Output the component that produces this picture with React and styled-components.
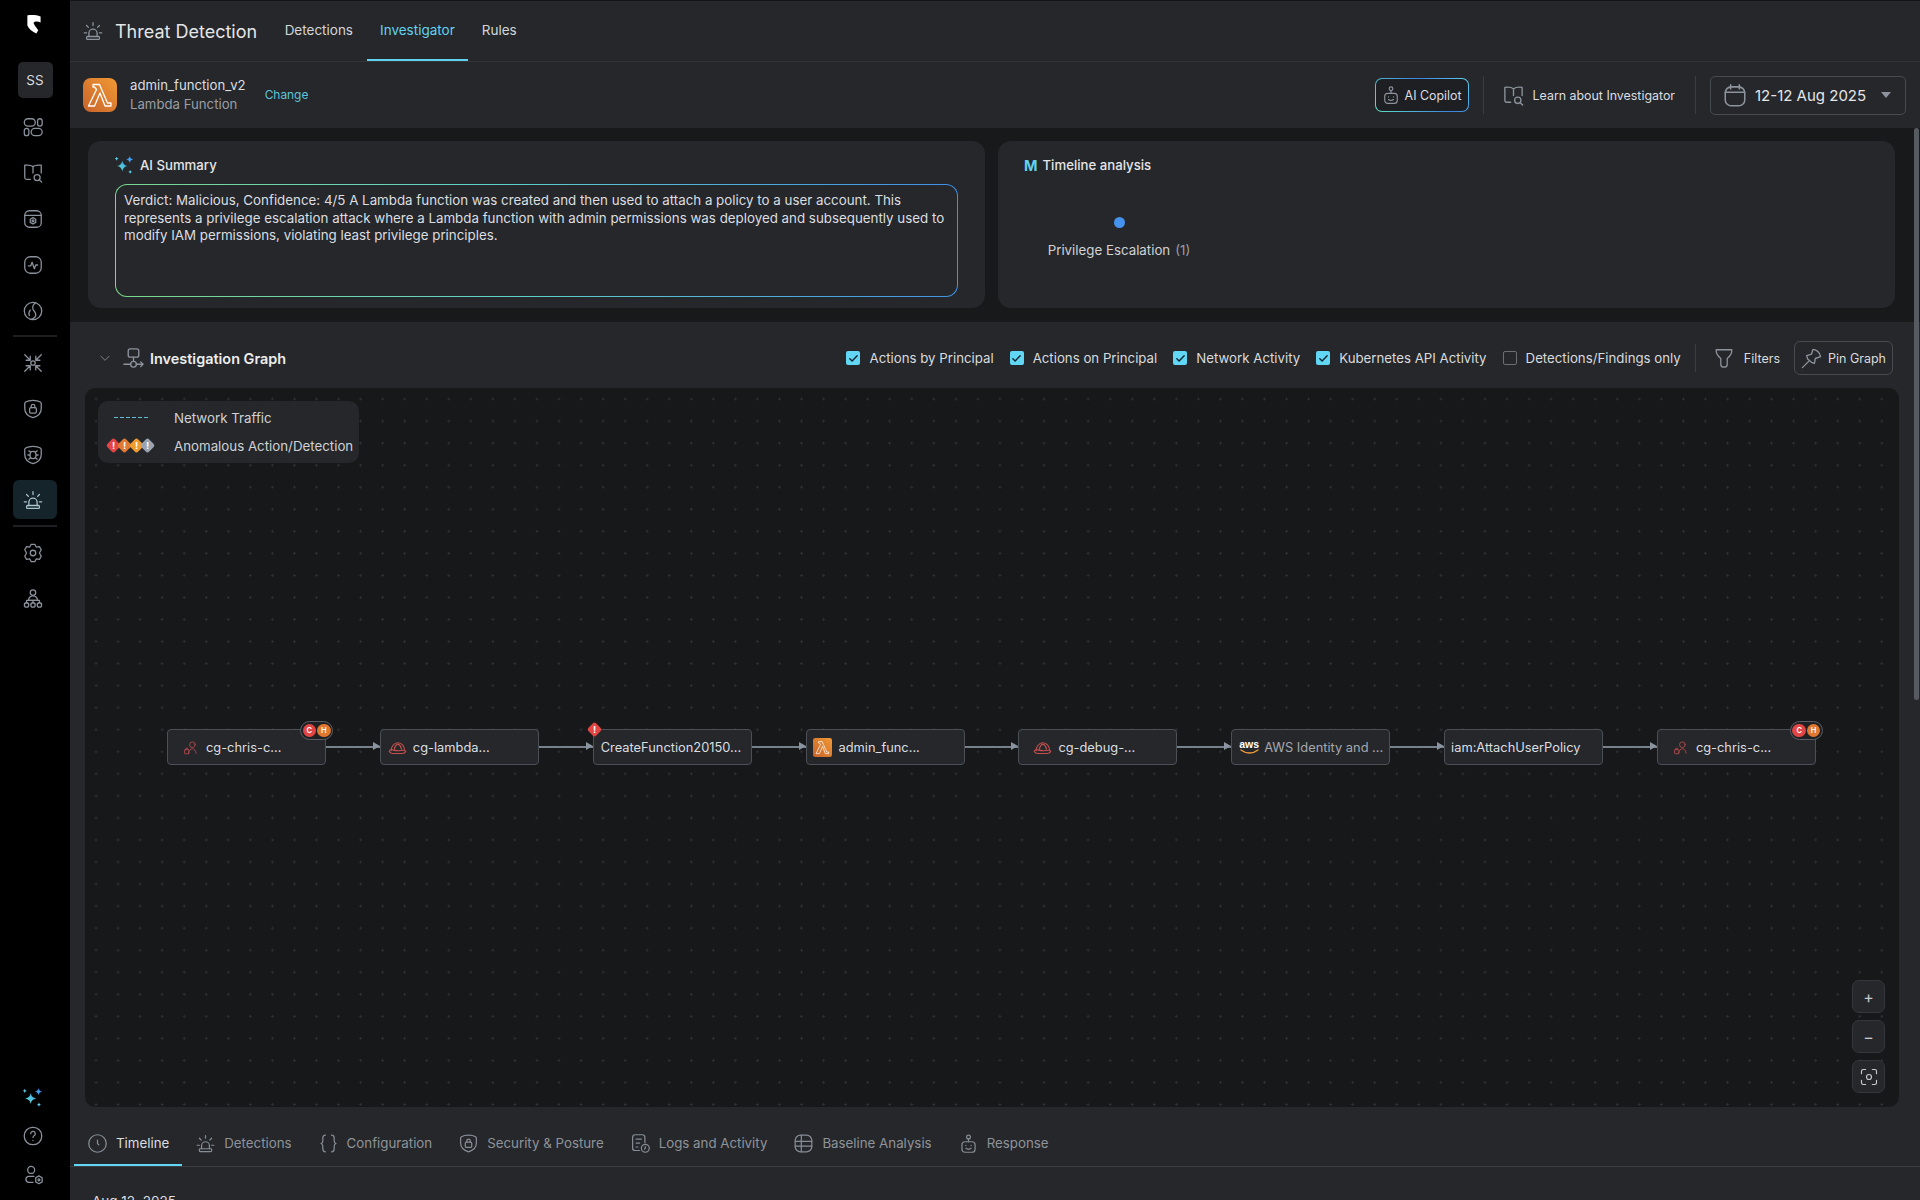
import React from "react";
import styled, { createGlobalStyle } from "styled-components";

const GlobalStyle = createGlobalStyle`
  html, body {
    margin: 0;
    padding: 0;
    height: 100%;
    overflow: hidden;
    background: #18191b;
    font-family: Inter, "Liberation Sans", sans-serif;
  }
  * { box-sizing: border-box; }
`;

const Shell = styled.div`
  display: flex;
  width: 1920px;
  height: 1200px;
  overflow: hidden;
  color: #e6e7e9;
`;

/* ---------- left rail ---------- */

const Rail = styled.nav`
  width: 70px;
  flex-shrink: 0;
  background: #000;
  display: flex;
  flex-direction: column;
  align-items: center;
  padding: 14px 0 6px;
`;

const RailLogo = styled.div`
  height: 24px;
  margin: 0 4px 24px 0;
  color: #fff;
`;

const Avatar = styled.div`
  width: 35px;
  height: 36px;
  border-radius: 5px;
  background: #25272b;
  display: flex;
  align-items: center;
  justify-content: center;
  font-size: 13.5px;
  color: #d9dbde;
  margin-bottom: 6px;
`;

const RailItem = styled.div`
  width: 44px;
  height: ${p => (p.$active ? "39px" : "46px")};
  margin: ${p => (p.$active ? "2px 0 0" : "0")};
  padding-right: 4px;
  border-radius: 6px;
  display: flex;
  align-items: center;
  justify-content: center;
  background: ${p => (p.$active ? "#14242a" : "transparent")};
  color: ${p => (p.$active ? "#a9c4cc" : "#8b929c")};
`;

const RailDivider = styled.div`
  width: 44px;
  height: 2px;
  margin: ${p => p.$margin || "1px 0 3px"};
  background: #1d1f22;
`;

const RailBottom = styled.div`
  margin-top: auto;
  display: flex;
  flex-direction: column;
  align-items: center;
  padding-right: 4px;
`;

const RailFootItem = styled.div`
  height: 38.5px;
  display: flex;
  align-items: center;
  color: #8b929c;
`;

/* ---------- generic icon ---------- */

const Svg = styled.svg.attrs(p => ({
  viewBox: "0 0 24 24",
  width: p.$size || 20,
  height: p.$size || 20,
  fill: "none",
  stroke: "currentColor",
  strokeWidth: p.$stroke || 1.4,
  strokeLinecap: "round",
  strokeLinejoin: "round",
}))`
  flex-shrink: 0;
  display: block;
  color: ${p => p.$color || "inherit"};
`;

const Siren = props => (
  <Svg {...props}>
    <rect x="5" y="18" width="14" height="3.2" rx="1" />
    <path d="M7.5 18v-3.5a4.5 4.5 0 0 1 9 0V18" />
    <path d="M12 3v3M5 6l2 2M19 6l-2 2M2.5 14H5M19 14h2.5" />
  </Svg>
);
const Panels = props => (
  <Svg {...props}>
    <rect x="2.5" y="3" width="12" height="8" rx="4" />
    <rect x="17" y="3" width="5" height="8" rx="2.5" />
    <rect x="2.5" y="13.5" width="5" height="8" rx="2.5" />
    <rect x="10" y="13.5" width="12" height="8" rx="4" />
  </Svg>
);
const MapSearch = props => (
  <Svg {...props}>
    <path d="M9 19H5a2 2 0 0 1-2-2V3.5C7 3 10 3.5 12 5c2-1.5 5-2 9-1.500V12" />
    <path d="M12 5v7" />
    <circle cx="16.5" cy="17" r="3.3" />
    <path d="M19 19.5l2.5 2.5" />
  </Svg>
);
const GearCard = props => (
  <Svg {...props}>
    <rect x="3" y="3" width="18" height="18" rx="5" />
    <path d="M3 8h18" />
    <path d="M12 10.5l3 1.7v3.5l-3 1.8-3-1.8v-3.5z" />
    <circle cx="12" cy="14" r="1" />
  </Svg>
);
const Pulse = props => (
  <Svg {...props}>
    <rect x="3" y="3" width="18" height="18" rx="6" />
    <path d="M7 13h2.5l1.5-4 2.5 7 1.5-4H17" />
  </Svg>
);
const Swirl = props => (
  <Svg {...props}>
    <circle cx="12" cy="12" r="9.5" />
    <path d="M15 3c-3 2-4 4-3 7 1 2.5 3 3 3 6 0 2-2 4-5 5" />
    <path d="M8 17c-1-2-.5-4 1-6" />
  </Svg>
);
const Converge = props => (
  <Svg {...props}>
    <circle cx="12" cy="12" r="2.4" />
    <path d="M3 3l6 6M9 4.5V9H4.5M21 3l-6 6M15 4.5V9h4.5M3 21l6-6M4.5 15H9v4.5M21 21l-6-6M19.5 15H15v4.5" />
  </Svg>
);
const shield =
  "M12 2.5c3 0 6 .5 8 1.800.7.5 1 1 1 1.800v5.400c0 5-4 8.500-9 10-5-1.500-9-5-9-10V6.100c0-.8.3-1.300 1-1.800 2-1.300 5-1.800 8-1.800z";
const ShieldLock = props => (
  <Svg {...props}>
    <path d={shield} />
    <rect x="8.3" y="10.5" width="7.4" height="6" rx="1.5" />
    <path d="M10 10.5V9a2 2 0 0 1 4 0v1.500" />
  </Svg>
);
const ShieldBug = props => (
  <Svg {...props}>
    <path d={shield} />
    <ellipse cx="12" cy="12" rx="3.3" ry="4" />
    <path d="M9 8.500l-1.500-1M15 8.500l1.500-1M8.500 12H6.500M15.500 12h2M9 15.500l-1.500 1M15 15.500l1.500 1" />
  </Svg>
);
const Gear = props => (
  <Svg {...props}>
    <path d="M10 2.500h4l1.500 3 3.500-.5 2 3.500-2 3.500 2 3.500-2 3.500-3.500-.5-1.500 3h-4l-1.500-3-3.500.5-2-3.500 2-3.500-2-3.500 2-3.500 3.500.5z" />
    <circle cx="12" cy="12" r="3" />
  </Svg>
);
const Org = props => (
  <Svg {...props}>
    <circle cx="12" cy="5" r="3" />
    <path d="M7 13.500c0-2.500 2-5 5-5s5 2.500 5 5z" />
    <path d="M5 16v-2.500h14V16M12 13.500V16" />
    <circle cx="5" cy="18.5" r="2.4" />
    <circle cx="12" cy="18.5" r="2.4" />
    <circle cx="19" cy="18.5" r="2.4" />
  </Svg>
);
const Help = props => (
  <Svg {...props}>
    <rect x="2.5" y="2.5" width="19" height="19" rx="9" />
    <path d="M9.500 9.500a2.500 2.500 0 1 1 3.600 2.200c-.8.400-1.100 1-1.100 1.800M12 16.800v.1" />
  </Svg>
);
const UserGear = props => (
  <Svg {...props}>
    <circle cx="10" cy="6.5" r="3.8" />
    <path d="M13 13.500H7a3.300 3.300 0 0 0 0 6.500h5" />
    <path d="M18.500 13l3.500 2v4.500l-3.500 2-3.500-2V15z" />
    <circle cx="18.5" cy="17.3" r="1" />
  </Svg>
);
const Robot = props => (
  <Svg {...props}>
    <rect x="4.5" y="10" width="15" height="12" rx="3.5" />
    <circle cx="12" cy="4.5" r="2.2" />
    <path d="M12 6.700V10M9 14.200v.1M15 14.200v.1M9 17.500c1.800 1.300 4.200 1.300 6 0" />
  </Svg>
);
const Calendar = props => (
  <Svg {...props}>
    <rect x="3" y="4.5" width="18" height="17.5" rx="5.5" />
    <path d="M3 9.500h18M8 2.500v4M16 2.500v4" />
  </Svg>
);
const Flow = props => (
  <Svg {...props}>
    <rect x="6.5" y="2" width="11" height="8.5" rx="2" />
    <path d="M12 10.500V15M2 18h7M15 18h7M19.500 15.500L22 18l-2.500 2.500" />
    <circle cx="12" cy="18" r="3" />
  </Svg>
);
const Funnel = props => (
  <Svg {...props}>
    <path d="M3.500 3h17c.5 4-2 7-5 9.500V19c0 1.800-1.500 3-3.500 3s-3.500-1.200-3.500-3v-6.500C5.500 10 3 7 3.500 3z" />
  </Svg>
);
const PinIcon = props => (
  <Svg {...props}>
    <path d="M13.500 2.500c4 .5 7 3.500 8 7.500l-5.500 2-1 5-3-1-4-3.500-1-3.500 5-1.500z" />
    <path d="M9 15l-6.500 6.500" />
  </Svg>
);
const Clock = props => (
  <Svg {...props}>
    <circle cx="12" cy="12" r="10" />
    <path d="M12 8v4l1.500 1.500" />
  </Svg>
);
const Braces = props => (
  <Svg {...props}>
    <path d="M8.500 2.500C6 2.500 5.500 4 5.500 6v3c0 1.500-.7 2.500-2 3 1.300.5 2 1.500 2 3v3c0 2 .5 3.500 3 3.500" />
    <path d="M15.500 2.500c2.500 0 3 1.500 3 3.500v3c0 1.500.7 2.500 2 3-1.300.5-2 1.500-2 3v3c0 2-.5 3.500-3 3.500" />
  </Svg>
);
const LogClock = props => (
  <Svg {...props}>
    <path d="M11 20H6a3 3 0 0 1-3-3V5a3 3 0 0 1 3-3h8a3 3 0 0 1 3 3v6" />
    <path d="M7 7h6M7 11.500h4M7 16h2" />
    <circle cx="17.5" cy="17.5" r="4.5" />
    <path d="M17.500 15.500v2l-1 1" />
  </Svg>
);
const TableRound = props => (
  <Svg {...props}>
    <rect x="2.5" y="2.5" width="19" height="19" rx="6" />
    <path d="M2.500 9.500h19M2.500 15h19M9.500 2.500v19" />
  </Svg>
);
const PersonLock = props => (
  <Svg {...props}>
    <circle cx="15" cy="7.5" r="4.5" />
    <path d="M9 21c.5-4 3-7 6-7s5.500 3 6 7" />
    <rect x="2.5" y="15.5" width="7" height="6.5" rx="1" />
    <path d="M4.300 15.500v-1a1.700 1.700 0 0 1 3.400 0v1" />
  </Svg>
);
const HardHat = props => (
  <Svg {...props}>
    <path d="M4 16c0-5 3.500-10 8.500-10S21 10.500 21 16" />
    <path d="M8 14c.5-3 2-5.500 4.500-6.500M17 14c-.5-3-2-5.500-4.500-6.500" />
    <path d="M1.500 17c.5-2 2-2.500 4-2 4 1 9 1.500 13.500.5 1.500-.3 3 .3 3.500 1.500-1 1.800-3 2.500-5 2.500H6c-2 0-3.500-1-4.500-2.500z" />
  </Svg>
);

const Sparkles = ({ id, size }) => (
  <svg width={size} height={size} viewBox="0 0 24 24" style={{ display: "block" }}>
    <defs>
      <linearGradient id={id} x1="0" y1="1" x2="1" y2="0">
        <stop offset="0" stopColor="#5fe3c8" />
        <stop offset="1" stopColor="#3f9cf0" />
      </linearGradient>
    </defs>
    <path d="M9.500 6.500c.6 3.600 2.400 5.400 6 6-3.600.6-5.400 2.400-6 6-.6-3.600-2.400-5.400-6-6 3.600-.6 5.400-2.400 6-6z" fill={`url(#${id})`} />
    <path d="M18 1c.4 2.300 1.700 3.600 4 4-2.300.4-3.600 1.700-4 4-.4-2.300-1.700-3.600-4-4 2.300-.4 3.600-1.700 4-4z" fill="#3f9cf0" />
    <path d="M3 2l.7 1.500 1.500.7-1.500.7L3 6.500l-.7-1.600L.8 4.200l1.500-.7z" fill="#5fd3ee" />
    <path d="M18.500 17l.7 1.600 1.500.7-1.500.7-.7 1.500-.7-1.500-1.500-.7 1.500-.7z" fill="#5fd3ee" />
  </svg>
);

const LambdaBadge = ({ size, radius, id }) => (
  <svg width={size} height={size} viewBox="0 0 34 34" style={{ display: "block", flexShrink: 0 }}>
    <defs>
      <linearGradient id={id} x1="0" y1="1" x2="1" y2="0">
        <stop offset="0" stopColor="#c8622a" />
        <stop offset="1" stopColor="#f09a35" />
      </linearGradient>
    </defs>
    <rect width="34" height="34" rx={radius} fill={`url(#${id})`} />
    <path
      d="M10 6.500h6.500l8 18.500h3.500v3h-6L17 15 11.500 28H5.500l8-16.500-2-2.500H10z"
      fill="none"
      stroke="#fff"
      strokeWidth="1.300"
      strokeLinejoin="round"
    />
  </svg>
);

/* ---------- main column ---------- */

const Main = styled.div`
  flex: 1;
  min-width: 0;
  display: flex;
  flex-direction: column;
  position: relative;
`;

const TopBar = styled.header`
  height: 62px;
  flex-shrink: 0;
  background: #25272b;
  border-top: 1px solid #131417;
  border-bottom: 1px solid #32343a;
  display: flex;
  align-items: stretch;
  padding-left: 12px;
  color: #8d939d;
`;

const PageTitle = styled.h1`
  margin: 0 14px 0 11px;
  font-size: 18px;
  font-weight: 400;
  color: #e4e5e7;
  align-self: center;
  white-space: nowrap;
`;

const TopTab = styled.div`
  display: flex;
  align-items: center;
  padding: 0 13.5px 2px;
  font-size: 13.5px;
  color: ${p => (p.$active ? "#62d3ee" : "#d4d6d9")};
  box-shadow: ${p => (p.$active ? "inset 0 -2px 0 #62d3ee" : "none")};
`;

const SubBar = styled.div`
  height: 66px;
  flex-shrink: 0;
  background: #25272b;
  display: flex;
  align-items: center;
  padding: 0 14px 0 13px;
`;

const EntityText = styled.div`
  margin-left: 13px;
  display: flex;
  flex-direction: column;
  gap: 4px;
  font-size: 13.2px;
  line-height: 15px;
`;

const EntityName = styled.span`
  color: #dcdee0;
`;

const EntityType = styled.span`
  color: #9a9ea5;
`;

const ChangeLink = styled.a`
  margin: 0 0 2px 19px;
  font-size: 11.9px;
  color: #5ec4dc;
`;

const BarSpacer = styled.div`
  flex: 1;
`;

const CopilotButton = styled.button`
  width: 94px;
  height: 34px;
  padding: 0 0 0 5px;
  display: flex;
  align-items: center;
  gap: 4px;
  border-radius: 7px;
  border: 1.5px solid transparent;
  background:
    linear-gradient(#1d1f22, #1d1f22) padding-box,
    linear-gradient(45deg, #5fe0c4, #3c82e0 60%, #5fd3ee) border-box;
  color: #dcdee0;
  font-family: inherit;
  font-size: 12.4px;
`;

const VRule = styled.div`
  width: 1px;
  height: ${p => p.$h || "38px"};
  background: #3a3c41;
  margin: ${p => p.$margin};
`;

const LearnLink = styled.div`
  display: flex;
  align-items: center;
  gap: 8px;
  font-size: 12.4px;
  color: #dcdee0;
`;

const DatePicker = styled.div`
  width: 196px;
  height: 39px;
  padding: 0 14px 0 11px;
  border: 1px solid #474a50;
  border-radius: 5px;
  display: flex;
  align-items: center;
  gap: 7px;
  font-size: 15px;
  color: #e4e5e7;
  white-space: nowrap;
`;

const Caret = styled.span`
  margin-left: auto;
  width: 0;
  height: 0;
  border-left: 5px solid transparent;
  border-right: 5px solid transparent;
  border-top: 6px solid #8d939d;
`;

const ScrollThumb = styled.div`
  position: absolute;
  right: 1px;
  top: 128px;
  width: 5px;
  height: 572px;
  border-radius: 3px;
  background: #565a61;
`;

/* ---------- summary cards ---------- */

const SummaryRow = styled.section`
  height: 194px;
  flex-shrink: 0;
  padding: 13px 25px 14px 18px;
  display: grid;
  grid-template-columns: 897px 897px;
  grid-template-rows: 167px;
  column-gap: 13px;
`;

const Card = styled.div`
  background: #25272b;
  border-radius: 13px;
  padding: 15px 27px;
`;

const CardHead = styled.div`
  display: flex;
  align-items: center;
  gap: 5px;
  height: 18px;
  font-size: 13.2px;
  font-weight: 500;
  color: #e4e5e7;
`;

const HeadSpark = styled.span`
  margin-left: -1px;
`;

const SummaryBox = styled.div`
  margin-top: 10px;
  width: 843px;
  height: 113px;
  padding: 7px 8px;
  border-radius: 12px;
  border: 1.5px solid transparent;
  background:
    linear-gradient(#25272b, #25272b) padding-box,
    linear-gradient(75deg, #7bd88a, #5fd3c8 45%, #3f8fe8) border-box;
  font-size: 13.33px;
  line-height: 17.7px;
  color: #dcdee0;
`;

const MBadge = styled.span`
  font-size: 14.5px;
  font-weight: 700;
  color: #62d3ee;
  margin-left: -1px;
`;

const TacticColumn = styled.div`
  width: 142px;
  margin: 43px 0 0 23px;
  display: flex;
  flex-direction: column;
  align-items: center;
  gap: 14px;
`;

const TacticDot = styled.span`
  width: 11px;
  height: 11px;
  border-radius: 50%;
  background: #4593ee;
`;

const TacticLabel = styled.span`
  font-size: 13.3px;
  color: #d0d2d5;
  white-space: nowrap;
`;

const TacticCount = styled.span`
  color: #9a9ea5;
  margin-left: 5px;
`;

/* ---------- investigation graph ---------- */

const GraphPanel = styled.section`
  flex-shrink: 0;
  background: #25272b;
  padding-right: 21px;
  padding-left: 15px;
`;

const GraphBar = styled.div`
  height: 66px;
  display: flex;
  align-items: center;
  padding: 6px 6px 0 13px;
`;

const ChevronGap = styled.span`
  width: 10px;
`;

const GraphTitle = styled.h2`
  margin: 0 0 0 5px;
  font-size: 14.45px;
  font-weight: 600;
  color: #eceded;
`;

const CheckItem = styled.label`
  display: flex;
  align-items: center;
  gap: 9px;
  margin-left: 16px;
  font-size: 13.25px;
  color: #d9dbde;
  white-space: nowrap;
`;

const CheckBox = styled.span`
  width: 14px;
  height: 14px;
  border-radius: 2px;
  display: flex;
  align-items: center;
  justify-content: center;
  background: ${p => (p.$on ? "#62d6f5" : "transparent")};
  border: ${p => (p.$on ? "none" : "1.3px solid #6a6d73")};
  color: #10222a;
`;

const FilterLink = styled.div`
  display: flex;
  align-items: center;
  gap: 9px;
  font-size: 12.5px;
  color: #d9dbde;
  margin-right: 14px;
`;

const PinButton = styled.div`
  width: 99px;
  height: 34px;
  padding-left: 5px;
  display: flex;
  align-items: center;
  gap: 5px;
  border: 1px solid #474a50;
  border-radius: 6px;
  font-size: 12.5px;
  color: #d9dbde;
`;

const Canvas = styled.div`
  position: relative;
  height: 719px;
  border-radius: 10px;
  background-color: #17181a;
  background-image: radial-gradient(circle, #2e3034 1px, transparent 1.2px);
  background-size: 22.05px 22.05px;
  background-position: 0px 0px;
`;

const Legend = styled.div`
  position: absolute;
  left: 13px;
  top: 13px;
  width: 261px;
  height: 62px;
  padding-top: 3.5px;
  border-radius: 10px;
  background: #25272b;
  font-size: 13.3px;
  color: #cfd1d4;
  display: grid;
  grid-template-columns: 76px 1fr;
  grid-auto-rows: 26px;
  row-gap: 2px;
  align-items: center;
`;

const LegendMark = styled.div`
  display: flex;
  justify-content: center;
  padding-right: 11px;
`;

const DashLine = styled.div`
  width: 34px;
  height: 1.5px;
  background: repeating-linear-gradient(90deg, #62bcd6 0 4px, transparent 4px 6px);
`;

const Alert = styled.span`
  width: 11px;
  height: 11px;
  margin-left: ${p => p.$overlap || 0}px;
  border-radius: 2.5px;
  transform: rotate(45deg);
  background: ${p => p.$color};
  display: flex;
  align-items: center;
  justify-content: center;
  font-size: 9.5px;
  font-weight: 700;
  color: #fff;
  flex-shrink: 0;

  & > b {
    transform: rotate(-45deg);
    font-weight: 700;
  }
`;

const NodeRow = styled.div`
  position: absolute;
  left: 82px;
  top: 341px;
  display: flex;
  align-items: center;
`;

const Node = styled.div`
  position: relative;
  width: 159px;
  height: 36px;
  padding-left: ${p => p.$pad || 7}px;
  display: flex;
  align-items: center;
  gap: ${p => p.$gap || 7}px;
  background: #25272b;
  border: 1px solid #4b4f56;
  border-radius: 4px;
  font-size: 12.85px;
  color: ${p => p.$color || "#dcdee0"};
  white-space: nowrap;
`;

const Edge = styled.div`
  position: relative;
  width: 53.85px;
  height: 1.5px;
  background: #78808b;

  &::after {
    content: "";
    position: absolute;
    right: 0;
    top: -4px;
    border-left: 7px solid #8a93a0;
    border-top: 4.5px solid transparent;
    border-bottom: 4.5px solid transparent;
  }
`;

const SeverityPill = styled.div`
  position: absolute;
  right: -8px;
  top: -9px;
  width: 33px;
  height: 19px;
  padding: 0 1.5px;
  display: flex;
  align-items: center;
  justify-content: space-between;
  border: 1px solid #5a5d63;
  border-radius: 10px;
  background: #1f2023;
`;

const SeverityDot = styled.span`
  width: 13.5px;
  height: 13.5px;
  border-radius: 50%;
  background: ${p => p.$color};
  display: flex;
  align-items: center;
  justify-content: center;
  font-size: 7.5px;
  font-weight: 600;
  color: #fff;
`;

const NodeAlert = styled.div`
  position: absolute;
  left: -5px;
  top: -6px;
`;

const AwsMark = styled.div`
  display: flex;
  flex-direction: column;
  align-items: center;
  width: 20px;
  font-family: "Liberation Sans", sans-serif;
  font-size: 10.5px;
  font-weight: 700;
  line-height: 9px;
  color: #fff;
  margin-right: -1px;
`;

const ZoomStack = styled.div`
  position: absolute;
  right: 14px;
  bottom: 14px;
  display: flex;
  flex-direction: column;
  gap: 7px;
`;

const ZoomButton = styled.div`
  width: 33px;
  height: 33px;
  border-radius: 7px;
  background: #25272b;
  border: 1px solid #35373c;
  display: flex;
  align-items: center;
  justify-content: center;
  color: #c6c8cb;
  font-size: 16px;
`;

/* ---------- bottom tabs ---------- */

const BottomTabs = styled.div`
  height: 60px;
  flex-shrink: 0;
  background: #25272b;
  border-bottom: 1px solid #3c3e43;
  padding-left: 4px;
  display: flex;
  align-items: stretch;
`;

const BottomTab = styled.div`
  display: flex;
  align-items: center;
  gap: 8px;
  padding: 13px 13px 0;
  font-size: 13.3px;
  color: ${p => (p.$active ? "#dcdee0" : "#8f9399")};
  box-shadow: ${p => (p.$active ? "inset 0 -2px 0 #62d6f5" : "none")};

  & svg {
    color: #878d96;
  }
`;

const BottomPane = styled.div`
  flex: 1;
  background: #25272b;
  padding: 26px 0 0 22px;
  font-size: 13.5px;
  color: #dcdee0;
`;

const railIcons = [Panels, MapSearch, GearCard, Pulse, Swirl];
const railIconsTwo = [Converge, ShieldLock, ShieldBug];
const railIconsThree = [Gear, Org];

const filters = [
  { label: "Actions by Principal", on: true },
  { label: "Actions on Principal", on: true },
  { label: "Network Activity", on: true },
  { label: "Kubernetes API Activity", on: true },
  { label: "Detections/Findings only", on: false },
];

const tabs = [
  { label: "Timeline", Icon: Clock, active: true },
  { label: "Detections", Icon: Siren },
  { label: "Configuration", Icon: Braces },
  { label: "Security & Posture", Icon: ShieldLock },
  { label: "Logs and Activity", Icon: LogClock },
  { label: "Baseline Analysis", Icon: TableRound },
  { label: "Response", Icon: Robot },
];

const Severity = () => (
  <SeverityPill>
    <SeverityDot $color="#e14544">C</SeverityDot>
    <SeverityDot $color="#e0782f">H</SeverityDot>
  </SeverityPill>
);

function App() {
  return (
    <Shell>
      <GlobalStyle />
      <Rail>
        <RailLogo>
          <svg width="17" height="21" viewBox="0 0 18 22">
            <path
              d="M2 1.500C7 .5 12 1 16.500 2.500V9c-3-1.500-6-1.500-7.500.5 1 2.500 3 5 5 7.500l-2 3.500c-4-2-8-4.500-9.500-8.500V3c0-.8.2-1.300 0-1.500z"
              fill="#fff"
            />
          </svg>
        </RailLogo>
        <Avatar>SS</Avatar>
        {railIcons.map((Icon, i) => (
          <RailItem key={i}>
            <Icon $size={22} />
          </RailItem>
        ))}
        <RailDivider />
        {railIconsTwo.map((Icon, i) => (
          <RailItem key={i}>
            <Icon $size={22} />
          </RailItem>
        ))}
        <RailItem $active>
          <Siren $size={22} />
        </RailItem>
        <RailDivider $margin="6px 0 3px" />
        {railIconsThree.map((Icon, i) => (
          <RailItem key={i}>
            <Icon $size={22} />
          </RailItem>
        ))}
        <RailBottom>
          <RailFootItem>
            <Sparkles id="spark-rail" size={22} />
          </RailFootItem>
          <RailFootItem>
            <Help $size={22} />
          </RailFootItem>
          <RailFootItem>
            <UserGear $size={22} />
          </RailFootItem>
        </RailBottom>
      </Rail>

      <Main>
        <TopBar>
          <Siren $size={22} style={{ alignSelf: "center" }} />
          <PageTitle>Threat Detection</PageTitle>
          <TopTab>Detections</TopTab>
          <TopTab $active>Investigator</TopTab>
          <TopTab>Rules</TopTab>
        </TopBar>

        <SubBar>
          <LambdaBadge size={34} radius={8} id="lambda-head" />
          <EntityText>
            <EntityName>admin_function_v2</EntityName>
            <EntityType>Lambda Function</EntityType>
          </EntityText>
          <ChangeLink>Change</ChangeLink>
          <BarSpacer />
          <CopilotButton>
            <Robot $size={20} $color="#8d939d" />
            AI Copilot
          </CopilotButton>
          <VRule $margin="0 18px 0 14px" />
          <LearnLink>
            <MapSearch $size={23} $color="#8d939d" />
            Learn about Investigator
          </LearnLink>
          <VRule $margin="0 14px 0 20px" />
          <DatePicker>
            <Calendar $size={26} $color="#8d939d" />
            12-12 Aug 2025
            <Caret />
          </DatePicker>
        </SubBar>

        <SummaryRow>
          <Card>
            <CardHead>
              <HeadSpark>
                <Sparkles id="spark-card" size={21} />
              </HeadSpark>
              AI Summary
            </CardHead>
            <SummaryBox>
              Verdict: Malicious, Confidence: 4/5 A Lambda function was created and then used to attach a policy to a user
              account. This represents a privilege escalation attack where a Lambda function with admin permissions was
              deployed and subsequently used to modify IAM permissions, violating least privilege principles.
            </SummaryBox>
          </Card>
          <Card>
            <CardHead>
              <MBadge>M</MBadge>
              Timeline analysis
            </CardHead>
            <TacticColumn>
              <TacticDot />
              <TacticLabel>
                Privilege Escalation<TacticCount>(1)</TacticCount>
              </TacticLabel>
            </TacticColumn>
          </Card>
        </SummaryRow>

        <GraphPanel>
          <GraphBar>
            <Svg $size={14} $color="#8d939d">
              <path d="M5 9l7 7 7-7" />
            </Svg>
            <ChevronGap />
            <Flow $size={23} $color="#8d939d" />
            <GraphTitle>Investigation Graph</GraphTitle>
            <BarSpacer />
            {filters.map(f => (
              <CheckItem key={f.label}>
                <CheckBox $on={f.on}>
                  {f.on && (
                    <Svg $size={11} $stroke={3}>
                      <path d="M4 12.500l5 5L20 6" />
                    </Svg>
                  )}
                </CheckBox>
                {f.label}
              </CheckItem>
            ))}
            <VRule $h="28px" $margin="0 17px 0 14px" />
            <FilterLink>
              <Funnel $size={22} $color="#8d939d" />
              Filters
            </FilterLink>
            <PinButton>
              <PinIcon $size={23} $color="#8d939d" />
              Pin Graph
            </PinButton>
          </GraphBar>

          <Canvas>
            <Legend>
              <LegendMark>
                <DashLine />
              </LegendMark>
              <span>Network Traffic</span>
              <LegendMark>
                <Alert $color="#e14544"><b>!</b></Alert>
                <Alert $color="#df7a36" $overlap={0.5}><b>!</b></Alert>
                <Alert $color="#f09b2e" $overlap={0.5}><b>!</b></Alert>
                <Alert $color="#9aa3af" $overlap={0.5}><b>!</b></Alert>
              </LegendMark>
              <span>Anomalous Action/Detection</span>
            </Legend>

            <NodeRow>
              <Node $pad={15} $gap={8}>
                <PersonLock $size={15} $color="#b84a4a" />
                cg-chris-c...
                <Severity />
              </Node>
              <Edge />
              <Node $pad={7} $gap={6}>
                <HardHat $size={19} $color="#c4504e" />
                cg-lambda...
              </Node>
              <Edge />
              <Node>
                <NodeAlert>
                  <Alert $color="#e14544"><b>!</b></Alert>
                </NodeAlert>
                CreateFunction20150...
              </Node>
              <Edge />
              <Node $pad={6}>
                <LambdaBadge size={19} radius={4} id="lambda-node" />
                admin_func...
              </Node>
              <Edge />
              <Node $pad={14} $gap={6}>
                <HardHat $size={19} $color="#c4504e" />
                cg-debug-...
              </Node>
              <Edge />
              <Node $pad={7} $gap={6} $color="#a5a8ad">
                <AwsMark>
                  aws
                  <svg width="19" height="6" viewBox="0 0 19 6">
                    <path d="M1 1c5 4 12 4 17 0" fill="none" stroke="#f09a35" strokeWidth="1.4" strokeLinecap="round" />
                  </svg>
                </AwsMark>
                AWS Identity and ...
              </Node>
              <Edge />
              <Node $pad={6}>iam:AttachUserPolicy</Node>
              <Edge />
              <Node $pad={15} $gap={8}>
                <PersonLock $size={15} $color="#b84a4a" />
                cg-chris-c...
                <Severity />
              </Node>
            </NodeRow>

            <ZoomStack>
              <ZoomButton>+</ZoomButton>
              <ZoomButton>−</ZoomButton>
              <ZoomButton>
                <Svg $size={20}>
                  <path d="M3 8V5a2 2 0 0 1 2-2h3M16 3h3a2 2 0 0 1 2 2v3M21 16v3a2 2 0 0 1-2 2h-3M8 21H5a2 2 0 0 1-2-2v-3" />
                  <circle cx="12" cy="12" r="3" />
                </Svg>
              </ZoomButton>
            </ZoomStack>
          </Canvas>
        </GraphPanel>

        <BottomTabs>
          {tabs.map(({ label, Icon, active }) => (
            <BottomTab key={label} $active={active}>
              <Icon $size={21} />
              {label}
            </BottomTab>
          ))}
        </BottomTabs>
        <BottomPane>Aug 12, 2025</BottomPane>

        <ScrollThumb />
      </Main>
    </Shell>
  );
}

export default App;
